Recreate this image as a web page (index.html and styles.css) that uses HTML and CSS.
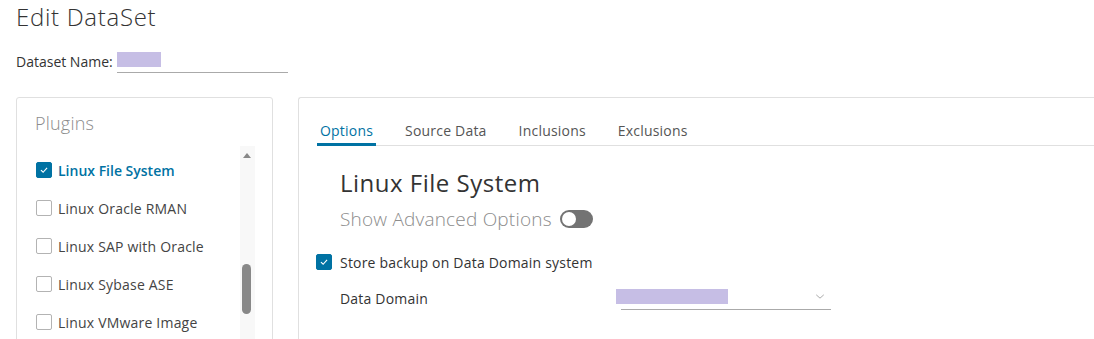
FILE: index.html
```html
<!DOCTYPE html>
<html lang="en">
<head>
  <meta charset="UTF-8">
  <title>Edit DataSet</title>
  <link rel="stylesheet" href="styles.css">
</head>
<body>
  <div class="page">
    <h1>Edit DataSet</h1>
    <div class="name-row">
      <span class="name-label">Dataset Name:</span>
      <span class="name-input"><span class="redacted name-value"></span></span>
    </div>

    <div class="panels">
      <!-- Plugins -->
      <div class="panel plugins">
        <h2>Plugins</h2>
        <div class="plugin-list">
          <ul>
            <li class="checked"><span class="box"><svg viewBox="0 0 16 16"><path d="M4.5 8.2 L7 10.6 L11.5 5.6" /></svg></span>Linux File System</li>
            <li><span class="box"></span>Linux Oracle RMAN</li>
            <li><span class="box"></span>Linux SAP with Oracle</li>
            <li><span class="box"></span>Linux Sybase ASE</li>
            <li><span class="box"></span>Linux VMware Image</li>
          </ul>
          <div class="scrollbar">
            <span class="arrow-up"></span>
            <span class="thumb"></span>
          </div>
        </div>
      </div>

      <!-- Options -->
      <div class="panel options">
        <div class="tabs">
          <span class="tab active">Options</span>
          <span class="tab">Source Data</span>
          <span class="tab">Inclusions</span>
          <span class="tab">Exclusions</span>
        </div>
        <div class="form">
          <h3>Linux File System</h3>
          <div class="advanced">Show Advanced Options <span class="toggle"><span class="knob"></span></span></div>
          <div class="check-row"><span class="box checked-box"><svg viewBox="0 0 16 16"><path d="M4.5 8.2 L7 10.6 L11.5 5.6" /></svg></span>Store backup on Data Domain system</div>
          <div class="field-row">
            <span class="field-label">Data Domain</span>
            <span class="select">
              <span class="redacted domain-value"></span>
              <svg class="chevron" viewBox="0 0 12 8"><path d="M1.5 2 L6 6 L10.5 2" /></svg>
            </span>
          </div>
        </div>
      </div>
    </div>
  </div>
</body>
</html>
```

FILE: styles.css
```css
/* Generelle stiler */
* { box-sizing: border-box; }
body {
  margin: 0;
  padding: 0;
  font-family: 'Open Sans', 'Lato', sans-serif;
  letter-spacing: 0.2px;
  background-color: #fff;
  color: #333;
  overflow: hidden;
}
.page {
  padding: 0 0 0 16px;
  width: 1200px;
}
h1 {
  margin: 0;
  font-size: 24px;
  font-weight: 300;
  letter-spacing: 0.7px;
  line-height: 33px;
  color: #333;
}
/* Navn-feltet */
.name-row {
  display: flex;
  align-items: center;
  margin-top: 18px;
  height: 21px;
  font-size: 14px;
  letter-spacing: 0;
}
.name-label { color: #333; margin-right: 4px; }
.name-input {
  width: 171px;
  height: 22px;
  padding-top: 1px;
  border-bottom: 1px solid #aaa;
}
.redacted {
  display: block;
  background-color: #c6bee5;
}
.name-value { width: 44px; height: 15px; }

/* Paneler */
.panels {
  display: flex;
  margin-top: 25px;
}
.panel {
  border: 1px solid #e0e0e0;
  border-radius: 3px;
  height: 260px;
}
.plugins {
  width: 257px;
  padding: 0 0 0 18px;
}
.plugins h2 {
  margin: 15px 0 0;
  font-size: 18px;
  font-weight: 300;
  line-height: 20px;
  color: #8c8c8c;
}
.plugin-list {
  display: flex;
  margin-top: 13px;
}
.plugin-list ul {
  list-style: none;
  margin: 0;
  padding: 0;
  width: 205px;
}
.plugin-list li {
  display: flex;
  align-items: center;
  height: 38px;
  font-size: 14px;
  color: #444;
}
.plugin-list li:first-child { margin-top: 5px; }
.plugin-list li.checked {
  color: #0072a3;
  font-weight: 600;
  letter-spacing: 0;
}
.box {
  display: inline-block;
  flex: none;
  width: 16px;
  height: 16px;
  border: 1px solid #b3b3b3;
  border-radius: 2px;
  margin: 0 6px 0 1px;
  background: #fff;
}
.checked .box, .checked-box {
  background-color: #0072a3;
  border-color: #0072a3;
}
.box svg {
  display: block;
  width: 14px;
  height: 14px;
  fill: none;
  stroke: #fff;
  stroke-width: 1.3;
}
/* Rullefelt */
.scrollbar {
  position: relative;
  width: 15px;
  height: 200px;
  background-color: #f8f8f8;
}
.arrow-up {
  position: absolute;
  left: 3px;
  top: 7px;
  width: 0;
  height: 0;
  border-left: 4px solid transparent;
  border-right: 4px solid transparent;
  border-bottom: 5px solid #888;
}
.thumb {
  position: absolute;
  left: 2px;
  top: 118px;
  width: 9px;
  height: 50px;
  border-radius: 5px;
  background-color: #888;
}

/* Høyre panel */
.options {
  margin-left: 25px;
  width: 820px;
  border-right: none;
  padding-left: 18px;
}
.tabs {
  display: flex;
  align-items: flex-end;
  margin-top: 20px;
  border-bottom: 1px solid #e0e0e0;
  height: 28px;
}
.tab {
  font-size: 14px;
  color: #555;
  line-height: 26px;
  margin-right: 26px;
  padding: 0 3px;
  height: 28px;
  margin-bottom: -1px;
  border-bottom: 3px solid transparent;
}
.tab.active {
  color: #0072a3;
  border-bottom-color: #0072a3;
}
.form { padding-left: 23px; }
.form h3 {
  margin: 23px 0 0;
  font-size: 24px;
  font-weight: 400;
  letter-spacing: 0.5px;
  line-height: 28px;
  color: #333;
}
.advanced {
  display: flex;
  align-items: center;
  margin-top: 10px;
  font-size: 19px;
  font-weight: 300;
  color: #8c8c8c;
  height: 24px;
}
.toggle {
  display: inline-block;
  width: 33px;
  height: 18px;
  margin-left: 8px;
  border-radius: 9px;
  background-color: #737373;
  padding: 2px;
}
.knob {
  display: block;
  width: 14px;
  height: 14px;
  border-radius: 50%;
  background-color: #fff;
}
.check-row {
  display: flex;
  align-items: center;
  margin: 21px 0 0 -24px;
  height: 20px;
  font-size: 14px;
  color: #333;
}
.check-row .box { margin: 0 8px 0 0; }
.field-row {
  display: flex;
  align-items: center;
  margin-top: 16px;
  height: 20px;
  font-size: 14px;
}
.field-label { width: 276px; color: #333; }
.select {
  position: relative;
  width: 215px;
  height: 21px;
  margin-top: 3px;
}
.domain-value { width: 112px; height: 15px; }
.select::after {
  content: "";
  position: absolute;
  left: 5px;
  right: 0;
  bottom: 0;
  border-bottom: 1px solid #aaa;
}
.chevron {
  position: absolute;
  right: 6px;
  top: 4px;
  width: 10px;
  height: 7px;
  fill: none;
  stroke: #999;
  stroke-width: 1;
}
```
